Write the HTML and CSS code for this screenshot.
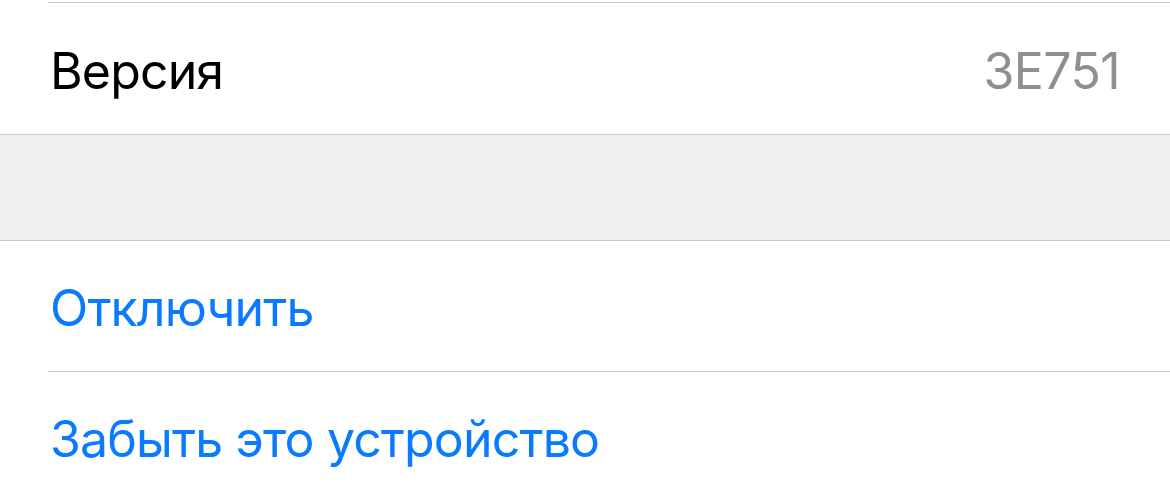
FILE: index.html
```html
<!DOCTYPE html>
<html lang="ru">
<head>
<meta charset="utf-8">
<link rel="stylesheet" href="styles.css">
</head>
<body>
<div class="group">
  <div class="stub"></div>
  <div class="row inset-top">
    <span class="label">Версия</span>
    <span class="value">3E751</span>
  </div>
</div>
<div class="spacer"></div>
<div class="group">
  <div class="row">
    <span class="label link">Отключить</span>
  </div>
  <div class="row inset-top">
    <span class="label link">Забыть это устройство</span>
  </div>
</div>
</body>
</html>
```
FILE: styles.css
```css
html, body {
  margin: 0;
  padding: 0;
  background: #ffffff;
}
body {
  font-family: Inter, "Liberation Sans", sans-serif;
  width: 1170px;
  height: 490px;
  overflow: hidden;
}
.group {
  background: #ffffff;
  border-bottom: 1px solid #c8c7cc;
}
.group:last-child {
  border-bottom: none;
}
.stub {
  height: 2px;
}
.row {
  display: flex;
  align-items: center;
  justify-content: space-between;
  height: 130px;
  margin-left: 48px;
  padding-left: 2px;
  padding-right: 50px;
  box-sizing: border-box;
}
.inset-top {
  border-top: 1px solid #c8c7cc;
  height: 131px;
}
.group:first-child .inset-top {
  height: 132px;
}
.label {
  font-size: 50px;
  letter-spacing: -0.85px;
  color: #000000;
  padding-top: 4px;
}
.value {
  font-size: 50px;
  letter-spacing: -0.6px;
  color: #8e8e93;
  padding-top: 4px;
}
.link {
  color: #0a7aff;
}
.spacer {
  height: 105px;
  background: #f0f0f3;
  border-bottom: 1px solid #c8c7cc;
}
```
